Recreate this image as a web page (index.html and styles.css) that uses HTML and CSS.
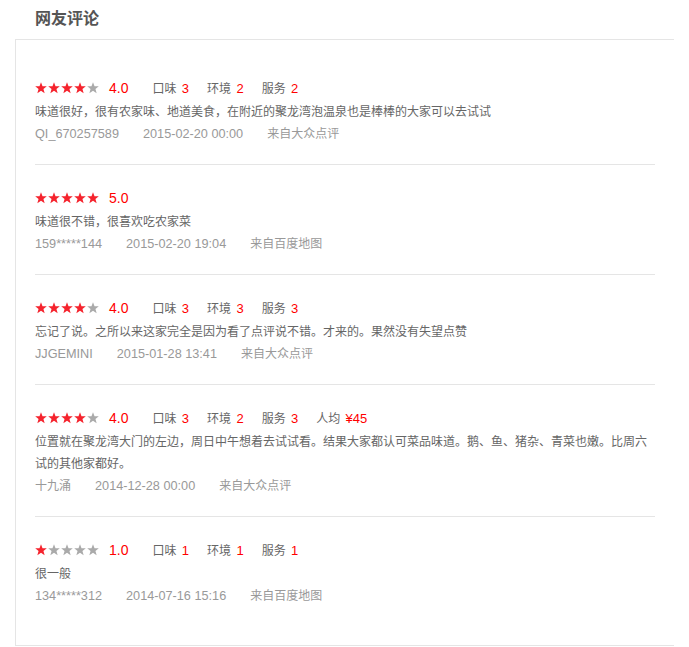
FILE: index.html
```html
<!DOCTYPE html>
<html lang="zh-CN">
<head>
    <meta charset="UTF-8">
    <meta name="viewport" content="width=device-width, initial-scale=1.0">
    <title>网友评论</title>
    <link rel="stylesheet" href="styles.css">
</head>
<body>
    <svg width="0" height="0" class="defs">
        <defs>
            <path id="star" d="M6 0.2 L7.5 4.2 L11.8 4.35 L8.45 7.0 L9.65 11.3 L6 8.85 L2.35 11.3 L3.55 7.0 L0.2 4.35 L4.5 4.2 Z"/>
        </defs>
    </svg>
    <h2 class="title">网友评论</h2>
    <div id="reviews">
        <div class="review">
            <div class="score-row">
                <span class="stars" data-score="4"></span>
                <span class="rating">4.0</span>
                <span class="sub">口味 <em>3</em></span>
                <span class="sub">环境 <em>2</em></span>
                <span class="sub">服务 <em>2</em></span>
            </div>
            <p class="text">味道很好，很有农家味、地道美食，在附近的聚龙湾泡温泉也是棒棒的大家可以去试试</p>
            <div class="meta">
                <span>QI_670257589</span>
                <span>2015-02-20 00:00</span>
                <span class="cn">来自大众点评</span>
            </div>
        </div>
        <div class="review">
            <div class="score-row">
                <span class="stars" data-score="5"></span>
                <span class="rating">5.0</span>
            </div>
            <p class="text">味道很不错，很喜欢吃农家菜</p>
            <div class="meta">
                <span>159*****144</span>
                <span>2015-02-20 19:04</span>
                <span class="cn">来自百度地图</span>
            </div>
        </div>
        <div class="review">
            <div class="score-row">
                <span class="stars" data-score="4"></span>
                <span class="rating">4.0</span>
                <span class="sub">口味 <em>3</em></span>
                <span class="sub">环境 <em>3</em></span>
                <span class="sub">服务 <em>3</em></span>
            </div>
            <p class="text">忘记了说。之所以来这家完全是因为看了点评说不错。才来的。果然没有失望点赞</p>
            <div class="meta">
                <span>JJGEMINI</span>
                <span>2015-01-28 13:41</span>
                <span class="cn">来自大众点评</span>
            </div>
        </div>
        <div class="review">
            <div class="score-row">
                <span class="stars" data-score="4"></span>
                <span class="rating">4.0</span>
                <span class="sub">口味 <em>3</em></span>
                <span class="sub">环境 <em>2</em></span>
                <span class="sub">服务 <em>3</em></span>
                <span class="sub">人均 <em>¥45</em></span>
            </div>
            <p class="text">位置就在聚龙湾大门的左边，周日中午想着去试试看。结果大家都认可菜品味道。鹅、鱼、猪杂、青菜也嫩。比周六试的其他家都好。</p>
            <div class="meta">
                <span class="cn">十九涌</span>
                <span>2014-12-28 00:00</span>
                <span class="cn">来自大众点评</span>
            </div>
        </div>
        <div class="review">
            <div class="score-row">
                <span class="stars" data-score="1"></span>
                <span class="rating">1.0</span>
                <span class="sub">口味 <em>1</em></span>
                <span class="sub">环境 <em>1</em></span>
                <span class="sub">服务 <em>1</em></span>
            </div>
            <p class="text">很一般</p>
            <div class="meta">
                <span>134*****312</span>
                <span>2014-07-16 15:16</span>
                <span class="cn">来自百度地图</span>
            </div>
        </div>
    </div>
  <script>
    // draw five stars for each rating, the first `score` ones lit
    document.querySelectorAll(".stars").forEach(el => {
        const score = parseInt(el.dataset.score, 10);
        let html = "";
        for (let i = 0; i < 5; i++) {
            const cls = i < score ? "on" : "off";
            html += `<svg class="star ${cls}" width="12" height="12" viewBox="0 0 12 12"><use href="#star"/></svg>`;
        }
        el.innerHTML = html;
    });
</script>
</body>
</html>
```

FILE: styles.css
```css
* {
    box-sizing: border-box;
}
body {
    margin: 0 15px;
    font-family: "Liberation Sans", "Noto Sans CJK SC", sans-serif;
    font-size: 12px;
    color: #666;
    background: #fff;
}
.defs {
    position: absolute;
}
.title {
    margin: 0;
    padding-left: 20px;
    height: 39px;
    line-height: 38px;
    font-size: 16px;
    font-weight: bold;
    color: #555;
}
#reviews {
    width: 660px;
    border: 1px solid #e5e5e5;
    padding: 15px 19px 19px;
}
.review {
    padding: 21px 0 19px;
    border-bottom: 1px solid #e5e5e5;
}
.review:last-child {
    border-bottom: none;
}
.score-row {
    display: flex;
    align-items: center;
    height: 23px;
    margin-bottom: 2px;
}
.stars {
    display: flex;
    gap: 1px;
    margin-right: 10px;
}
.star.on {
    fill: #f5232d;
}
.star.off {
    fill: #aaa;
}
.rating {
    font-size: 14px;
    color: #f00;
    margin-right: 6px;
}
.sub {
    margin-left: 18px;
    color: #666;
}
.sub em {
    font-style: normal;
    font-size: 13px;
    color: #f00;
    margin-left: 2px;
}
.text {
    margin: 0;
    line-height: 22px;
    color: #666;
}
.meta {
    display: flex;
    gap: 24px;
    line-height: 22px;
    font-size: 12.7px;
    color: #999;
}
.meta .cn {
    font-size: 12px;
}
```
